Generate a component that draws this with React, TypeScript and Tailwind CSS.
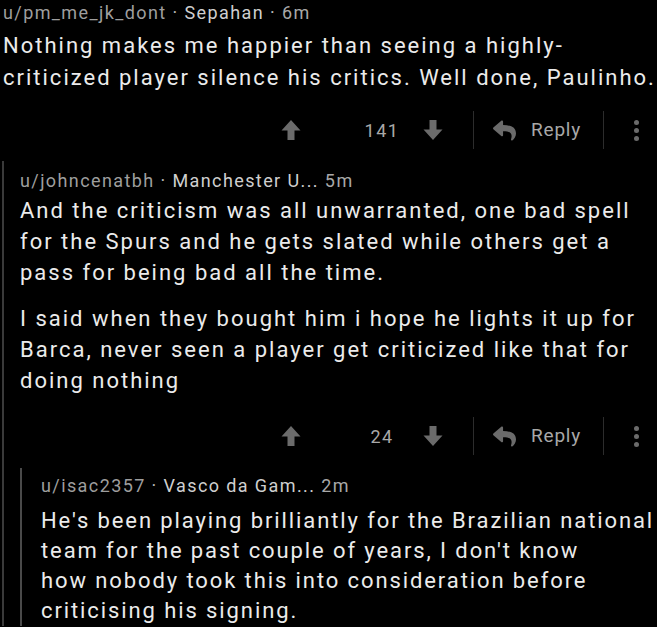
import React from "react";
import { FaReply } from "react-icons/fa";

const Up = () => (
  <svg width="20" height="22" viewBox="0 0 20 22">
    <path d="M10 1 L19.5 11.5 H13.5 V21 H6.5 V11.5 H0.5 Z" fill="#6b6b6b" />
  </svg>
);
const Down = () => (
  <svg width="20" height="22" viewBox="0 0 20 22">
    <path d="M10 21 L19.5 10.5 H13.5 V1 H6.5 V10.5 H0.5 Z" fill="#6b6b6b" />
  </svg>
);

function Actions({ count }: { count: string }) {
  return (
    <div className="flex h-[44px] items-center">
      <div className="ml-[276px] flex w-[30px] justify-center"><Up /></div>
      <div className="ml-[40px] flex w-[72px] justify-center text-[18px] tracking-[1.5px] text-[#a8a8a8]">{count}</div>
      <div className="flex w-[30px] justify-center"><Down /></div>
      <div className="ml-[25px] h-[38px] w-px bg-[#2c2c2c]" />
      <div className="ml-[19px] flex items-center">
        <FaReply size={23} color="#6b6b6b" />
        <span className="ml-[15px] text-[19px] tracking-[0.8px] text-[#a8a8a8]">Reply</span>
      </div>
      <div className="ml-[22px] h-[38px] w-px bg-[#2c2c2c]" />
      <div className="ml-[30px] flex flex-col gap-[3px]">
        <div className="h-[5px] w-[5px] rounded-full bg-[#6b6b6b]" />
        <div className="h-[5px] w-[5px] rounded-full bg-[#6b6b6b]" />
        <div className="h-[5px] w-[5px] rounded-full bg-[#6b6b6b]" />
      </div>
    </div>
  );
}

function Meta({ user, flair, time, tight }: { user: string; flair: string; time: string; tight?: boolean }) {
  return (
    <div className="whitespace-nowrap text-[18px] leading-[24px] tracking-[1.4px] text-[#9e9e9e]">
      {user} <span className="text-[#b8b8b8]">·</span> <span className="text-[#cfcfcf]">{flair}</span>
      {tight ? " " : <> <span className="text-[#b8b8b8]">·</span> </>}
      <span className="text-[#a8a8a8]">{time}</span>
    </div>
  );
}

export default function App() {
  return (
    <div className="h-[627px] w-[657px] overflow-hidden bg-black" style={{ fontFamily: "Roboto, 'Noto Sans', sans-serif" }}>
      <div className="pl-[3px] pt-[1px]">
        <Meta user="u/pm_me_jk_dont" flair="Sepahan" time="6m" />
        <div className="mt-[5px] whitespace-nowrap text-[22px] leading-[32px] tracking-[2px] text-[#ebebeb]">
          Nothing makes me happier than seeing a highly-
          <br />
          criticized player silence his critics. Well done, Paulinho.
        </div>
      </div>
      <div className="mt-[14px]">
        <Actions count="141" />
      </div>
      <div className="ml-[2px] mt-[9px] border-l-2 border-[#3a3a3a]">
        <div className="pl-[16px] pt-[8px]">
          <Meta user="u/johncenatbh" flair="Manchester U..." time="5m" tight />
          <div className="mt-[2px] whitespace-nowrap text-[22px] leading-[31px] tracking-[2px] text-[#ebebeb]">
            And the criticism was all unwarranted, one bad spell
            <br />
            for the Spurs and he gets slated while others get a
            <br />
            pass for being bad all the time.
          </div>
          <div className="mt-[15px] whitespace-nowrap text-[22px] leading-[31px] tracking-[2px] text-[#ebebeb]">
            I said when they bought him i hope he lights it up for
            <br />
            Barca, never seen a player get criticized like that for
            <br />
            doing nothing
          </div>
        </div>
        <div className="-ml-[4px] mt-[18px]">
          <Actions count="24" />
        </div>
        <div className="ml-[16px] mt-[10px] border-l-2 border-[#4a4a4a]">
          <div className="pl-[19px] pt-[6px]">
            <Meta user="u/isac2357" flair="Vasco da Gam..." time="2m" tight />
            <div className="mt-[8px] whitespace-nowrap text-[22px] leading-[30px] tracking-[1.9px] text-[#ebebeb]">
              He's been playing brilliantly for the Brazilian national
              <br />
              team for the past couple of years, I don't know
              <br />
              how nobody took this into consideration before
              <br />
              criticising his signing.
            </div>
          </div>
        </div>
      </div>
    </div>
  );
}
